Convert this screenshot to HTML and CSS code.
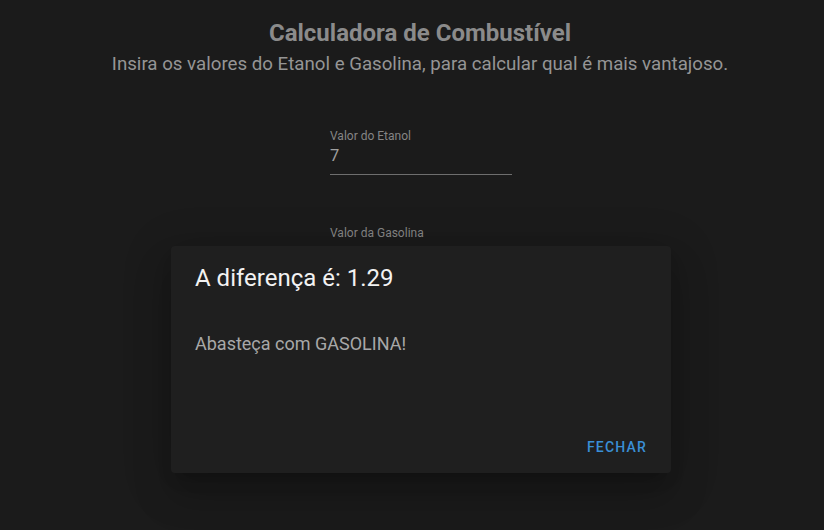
FILE: index.html
```html
<!DOCTYPE html>
<html lang="pt-BR">
<head>
<meta charset="utf-8">
<title>Calculadora de Combustível</title>
<link rel="stylesheet" href="styles.css">
</head>
<body>
<main class="page">
  <header class="head">
    <h1 class="title">Calculadora de Combustível</h1>
    <p class="subtitle">Insira os valores do Etanol e Gasolina, para calcular qual é mais vantajoso.</p>
  </header>
  <form class="form">
    <div class="field">
      <label class="label">Valor do Etanol</label>
      <div class="input">7</div>
    </div>
    <div class="field">
      <label class="label">Valor da Gasolina</label>
      <div class="input">&nbsp;</div>
    </div>
  </form>
</main>
<div class="dialog">
  <h2 class="dialog-title">A diferença é: 1.29</h2>
  <div class="dialog-content">Abasteça com GASOLINA!</div>
  <div class="dialog-actions"><button class="btn" type="button">Fechar</button></div>
</div>
</body>
</html>
```
FILE: styles.css
```css
html, body {
  margin: 0;
  padding: 0;
  background: #1b1b1b;
  height: 100%;
  overflow: hidden;
}
body {
  font-family: Roboto, "Liberation Sans", sans-serif;
}
.page {
  margin-left: 16px;
  display: flex;
  flex-direction: column;
  align-items: center;
}
.head {
  text-align: center;
  padding-top: 17px;
}
.title {
  margin: 0;
  font-size: 24px;
  font-weight: 700;
  color: #8b8b8b;
  line-height: 32px;
}
.subtitle {
  margin: 0;
  font-size: 18.7px;
  color: #959595;
  line-height: 30px;
}
.form {
  margin-top: 51px;
  display: flex;
  flex-direction: column;
  gap: 52px;
  width: 182px;
  padding-left: 2px;
}
.field {
  display: flex;
  flex-direction: column;
}
.label {
  font-size: 12px;
  color: #858585;
  line-height: 13px;
}
.input {
  font-size: 16.5px;
  color: #a0a0a0;
  line-height: 20px;
  padding: 3px 0 8px;
  border-bottom: 1px solid #6e6e6e;
}
.dialog {
  position: absolute;
  left: 171px;
  top: 246px;
  width: 500px;
  height: 227px;
  box-sizing: border-box;
  background: #1f1f1f;
  border-radius: 4px;
  box-shadow: 0 11px 15px -7px rgba(0,0,0,0.2), 0 24px 38px 3px rgba(0,0,0,0.14), 0 9px 46px 8px rgba(0,0,0,0.12);
  display: flex;
  flex-direction: column;
}
.dialog-title {
  margin: 0;
  padding: 16px 24px;
  font-size: 24px;
  font-weight: 400;
  line-height: 32px;
  color: #f2f2f2;
}
.dialog-content {
  flex: 1;
  padding: 22px 24px 8px;
  font-size: 18px;
  line-height: 24px;
  color: #a8a8a8;
}
.dialog-actions {
  display: flex;
  justify-content: flex-end;
  padding: 8px 16px;
}
.btn {
  background: none;
  border: 0;
  font-family: inherit;
  font-size: 14px;
  font-weight: 500;
  letter-spacing: 1.2px;
  text-transform: uppercase;
  color: #3a8fd6;
  padding: 6px 8px;
  height: 36px;
  min-width: 64px;
}
```
